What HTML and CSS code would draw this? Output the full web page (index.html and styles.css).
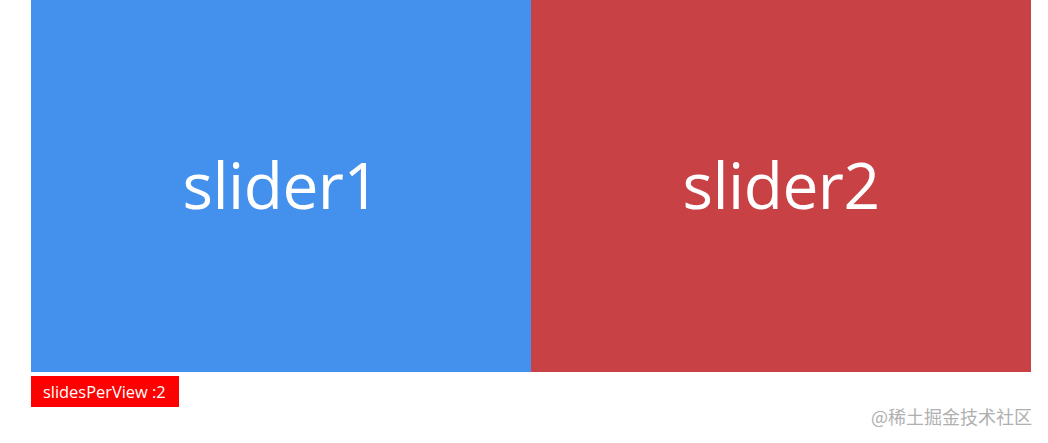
FILE: index.html
```html
<!DOCTYPE html>
<html lang="zh">
<head>
<meta charset="utf-8">
<title>swiper</title>
<link rel="stylesheet" href="styles.css">
</head>
<body>
<div class="page">
  <div class="swiper">
    <div class="slide slide-blue">slider1</div>
    <div class="slide slide-red">slider2</div>
  </div>
  <div class="tag">slidesPerView :2</div>
</div>
<div class="mark">@稀土掘金技术社区</div>
</body>
</html>
```
FILE: styles.css
```css
html, body {
  margin: 0;
  padding: 0;
  background: #fff;
  width: 1048px;
  height: 443px;
  overflow: hidden;
  font-family: "Open Sans", "Noto Sans", "Noto Sans CJK SC", sans-serif;
}
.page {
  padding-left: 31px;
  width: 1000px;
}
.swiper {
  display: flex;
  height: 372px;
}
.slide {
  flex: 1;
  display: flex;
  align-items: center;
  justify-content: center;
  color: #fff;
  font-size: 64px;
  padding-bottom: 4px;
  letter-spacing: -0.5px;
}
.slide-blue { background: #4391ec; }
.slide-red { background: #c84144; }
.tag {
  display: inline-block;
  margin-top: 4px;
  background: #ff0000;
  color: #fff;
  font-size: 16.4px;
  line-height: 31px;
  padding: 0 13px 0 12px;
}
.mark {
  position: absolute;
  right: 16px;
  top: 403px;
  font-family: "Noto Sans CJK SC", sans-serif;
  font-size: 18px;
  color: #b0b0b0;
}
```
